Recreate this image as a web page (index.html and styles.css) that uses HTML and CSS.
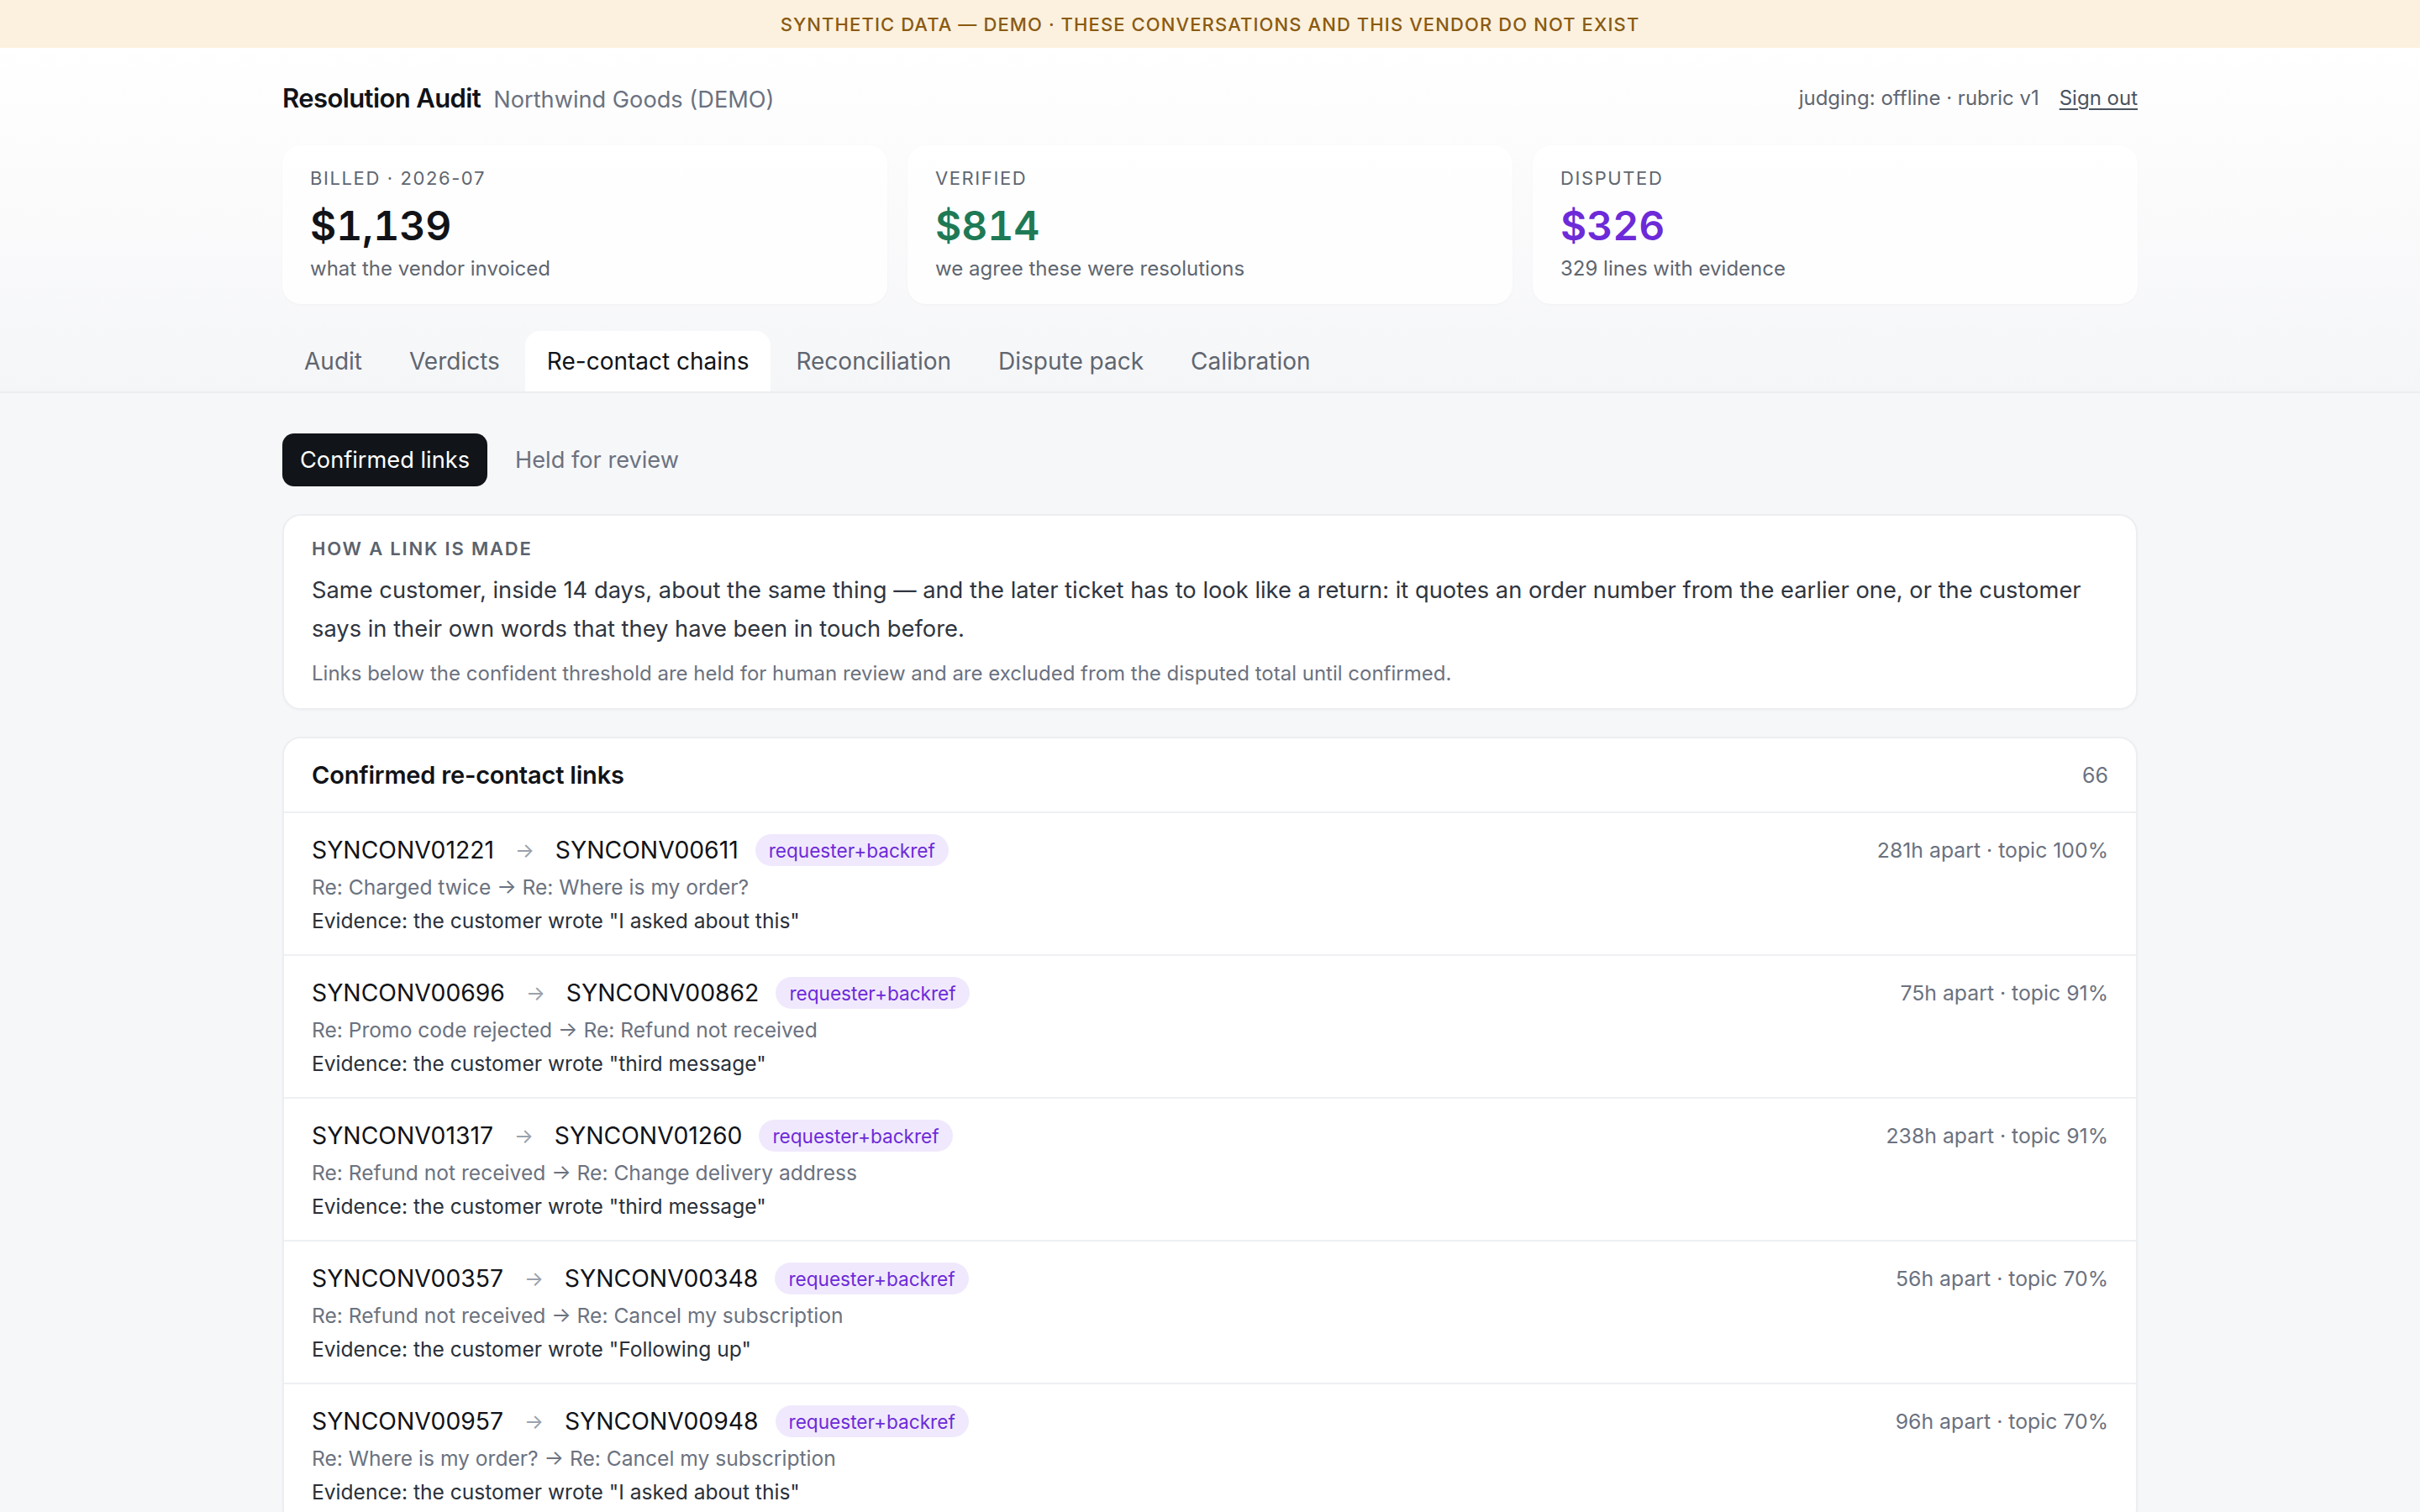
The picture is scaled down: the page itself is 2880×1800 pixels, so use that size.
FILE: index.html
```html
<!DOCTYPE html>
<html lang="en">
<head>
<meta charset="utf-8">
<title>Resolution Audit — Northwind Goods (DEMO)</title>
<link rel="stylesheet" href="styles.css">
</head>
<body>
<div class="banner">SYNTHETIC DATA — DEMO · THESE CONVERSATIONS AND THIS VENDOR DO NOT EXIST</div>
<header class="top">
  <div class="wrap">
    <div class="titlebar">
      <div class="brand">
        <span class="brand-name">Resolution Audit</span>
        <span class="brand-vendor">Northwind Goods (DEMO)</span>
      </div>
      <div class="session">
        <span>judging: offline · rubric v1</span>
        <a class="signout" href="#">Sign out</a>
      </div>
    </div>
    <div class="stats">
      <div class="stat">
        <div class="stat-label">BILLED · 2026-07</div>
        <div class="stat-value">$1,139</div>
        <div class="stat-sub">what the vendor invoiced</div>
      </div>
      <div class="stat">
        <div class="stat-label">VERIFIED</div>
        <div class="stat-value green">$814</div>
        <div class="stat-sub">we agree these were resolutions</div>
      </div>
      <div class="stat">
        <div class="stat-label">DISPUTED</div>
        <div class="stat-value purple">$326</div>
        <div class="stat-sub">329 lines with evidence</div>
      </div>
    </div>
    <nav class="tabs">
      <a class="tab" href="#">Audit</a>
      <a class="tab" href="#">Verdicts</a>
      <a class="tab active" href="#">Re-contact chains</a>
      <a class="tab" href="#">Reconciliation</a>
      <a class="tab" href="#">Dispute pack</a>
      <a class="tab" href="#">Calibration</a>
    </nav>
  </div>
</header>
<main class="wrap main">
  <div class="seg">
    <button class="seg-btn on">Confirmed links</button>
    <button class="seg-btn">Held for review</button>
  </div>

  <section class="card info">
    <div class="info-title">HOW A LINK IS MADE</div>
    <p class="info-body">Same customer, inside 14 days, about the same thing — and the later ticket has to look like a return: it quotes an order number from the earlier one, or the customer says in their own words that they have been in touch before.</p>
    <p class="info-note">Links below the confident threshold are held for human review and are excluded from the disputed total until confirmed.</p>
  </section>

  <section class="card list">
    <div class="list-head">
      <span class="list-title">Confirmed re-contact links</span>
      <span class="list-count">66</span>
    </div>

    <div class="row">
      <div class="row-top">
        <div class="ids">
          <span class="id">SYNCONV01221</span><span class="arrow">→</span><span class="id">SYNCONV00611</span>
          <span class="pill">requester+backref</span>
        </div>
        <span class="meta">281h apart · topic 100%</span>
      </div>
      <div class="subj">Re: Charged twice → Re: Where is my order?</div>
      <div class="evid">Evidence: the customer wrote "I asked about this"</div>
    </div>

    <div class="row">
      <div class="row-top">
        <div class="ids">
          <span class="id">SYNCONV00696</span><span class="arrow">→</span><span class="id">SYNCONV00862</span>
          <span class="pill">requester+backref</span>
        </div>
        <span class="meta">75h apart · topic 91%</span>
      </div>
      <div class="subj">Re: Promo code rejected → Re: Refund not received</div>
      <div class="evid">Evidence: the customer wrote "third message"</div>
    </div>

    <div class="row">
      <div class="row-top">
        <div class="ids">
          <span class="id">SYNCONV01317</span><span class="arrow">→</span><span class="id">SYNCONV01260</span>
          <span class="pill">requester+backref</span>
        </div>
        <span class="meta">238h apart · topic 91%</span>
      </div>
      <div class="subj">Re: Refund not received → Re: Change delivery address</div>
      <div class="evid">Evidence: the customer wrote "third message"</div>
    </div>

    <div class="row">
      <div class="row-top">
        <div class="ids">
          <span class="id">SYNCONV00357</span><span class="arrow">→</span><span class="id">SYNCONV00348</span>
          <span class="pill">requester+backref</span>
        </div>
        <span class="meta">56h apart · topic 70%</span>
      </div>
      <div class="subj">Re: Refund not received → Re: Cancel my subscription</div>
      <div class="evid">Evidence: the customer wrote "Following up"</div>
    </div>

    <div class="row">
      <div class="row-top">
        <div class="ids">
          <span class="id">SYNCONV00957</span><span class="arrow">→</span><span class="id">SYNCONV00948</span>
          <span class="pill">requester+backref</span>
        </div>
        <span class="meta">96h apart · topic 70%</span>
      </div>
      <div class="subj">Re: Where is my order? → Re: Cancel my subscription</div>
      <div class="evid">Evidence: the customer wrote "I asked about this"</div>
    </div>
  </section>
</main>
</body>
</html>
```

FILE: styles.css
```css
* { box-sizing: border-box; }

html, body {
  margin: 0;
  padding: 0;
}

body {
  font-family: Inter, "Noto Sans", "Liberation Sans", sans-serif;
  background: #f6f7f9;
  color: #111827;
  -webkit-font-smoothing: antialiased;
}

.banner {
  height: 57px;
  display: flex;
  align-items: center;
  justify-content: center;
  background: #fcf1de;
  color: #8a5a12;
  font-size: 22px;
  letter-spacing: 1.1px;
  font-weight: 500;
}

.top {
  background: linear-gradient(180deg, #ffffff 0%, #fbfbfc 40%, #f5f6f8 100%);
  border-bottom: 2px solid #eceef1;
}

.wrap {
  max-width: 2208px;
  margin: 0 auto;
}

.titlebar {
  display: flex;
  align-items: center;
  justify-content: space-between;
  padding-top: 39px;
  height: 79px;
}

.brand {
  display: flex;
  align-items: baseline;
  gap: 15px;
}

.brand-name {
  font-size: 31px;
  font-weight: 600;
  letter-spacing: -0.6px;
  color: #111318;
}

.brand-vendor {
  font-size: 27.2px;
  color: #6b7280;
}

.session {
  display: flex;
  align-items: baseline;
  gap: 24px;
  font-size: 24px;
  color: #5f6670;
}

.signout {
  color: #4b5360;
  text-decoration: underline;
  text-underline-offset: 4px;
}

.stats {
  display: grid;
  grid-template-columns: repeat(3, 1fr);
  gap: 24px;
  margin-top: 37px;
}

.stat {
  background: rgba(255, 255, 255, 0.8);
  border-radius: 22px;
  padding: 24px 33px 25px;
  box-shadow: 0 1px 3px rgba(17, 24, 39, 0.03);
}

.stat-label {
  font-size: 22px;
  line-height: 30px;
  letter-spacing: 1.6px;
  color: #5f6670;
}

.stat-value {
  margin-top: 14px;
  font-size: 48px;
  line-height: 56px;
  font-weight: 600;
  letter-spacing: 0;
  font-variant-numeric: tabular-nums;
  color: #111318;
}

.stat-value.green { color: #1e7a55; }
.stat-value.purple { color: #6d2ad8; }

.stat-sub {
  margin-top: 6px;
  font-size: 24px;
  line-height: 34px;
  color: #5f6670;
}

.tabs {
  display: flex;
  gap: 4px;
  margin-top: 32px;
}

.tab {
  display: block;
  padding: 18px 26px;
  line-height: 36px;
  font-size: 28px;
  color: #5f6670;
  text-decoration: none;
  border-radius: 18px 18px 0 0;
}

.tab.active {
  background: #ffffff;
  color: #111318;
}

.main {
  padding-top: 48px;
  padding-bottom: 60px;
}

.seg {
  display: flex;
  gap: 12px;
}

.seg-btn {
  font-family: inherit;
  font-size: 27.2px;
  line-height: 37px;
  padding: 13px 21px;
  border: 0;
  border-radius: 14px;
  background: transparent;
  color: #6b7280;
}

.seg-btn.on {
  background: #111418;
  color: #ffffff;
}

.card {
  background: #ffffff;
  border: 2px solid #eceef1;
  border-radius: 22px;
  box-shadow: 0 1px 3px rgba(17, 24, 39, 0.03);
}

.info {
  margin-top: 33px;
  padding: 24px 33px 23px;
}

.info-title {
  font-size: 22px;
  line-height: 31px;
  font-weight: 600;
  letter-spacing: 1.8px;
  color: #5a626d;
}

.info-body {
  margin: 11px 0 0;
  font-size: 27.3px;
  line-height: 46px;
  color: #2f3540;
}

.info-note {
  margin: 12px 0 0;
  font-size: 24px;
  line-height: 36px;
  color: #6b7280;
}

.list {
  margin-top: 32px;
  overflow: hidden;
}

.list-head {
  height: 89px;
  display: flex;
  align-items: center;
  justify-content: space-between;
  padding: 0 33px;
  border-bottom: 2px solid #eef0f3;
}

.list-title {
  font-size: 29px;
  font-weight: 600;
  letter-spacing: -0.2px;
  color: #111318;
}

.list-count {
  font-size: 25px;
  color: #6b7280;
}

.row {
  padding: 24px 33px 20px;
  border-bottom: 2px solid #eef0f3;
}

.row:last-child { border-bottom: 0; }

.row-top {
  display: flex;
  align-items: center;
  justify-content: space-between;
  height: 40px;
}

.ids {
  display: flex;
  align-items: center;
}

.id {
  font-size: 28.3px;
  color: #111318;
}

.arrow {
  font-size: 24px;
  color: #9aa1ab;
  margin: 0 25px;
}

.pill {
  margin-left: 20px;
  height: 38px;
  display: inline-flex;
  align-items: center;
  padding: 0 16px;
  border-radius: 19px;
  background: #f0e9fd;
  color: #6d2ad8;
  font-size: 22.6px;
}

.meta {
  font-size: 24.8px;
  color: #6b7280;
}

.subj {
  margin-top: 4px;
  font-size: 24.6px;
  line-height: 40px;
  color: #6b7280;
}

.evid {
  font-size: 24.6px;
  line-height: 40px;
  color: #2a303a;
}
```
